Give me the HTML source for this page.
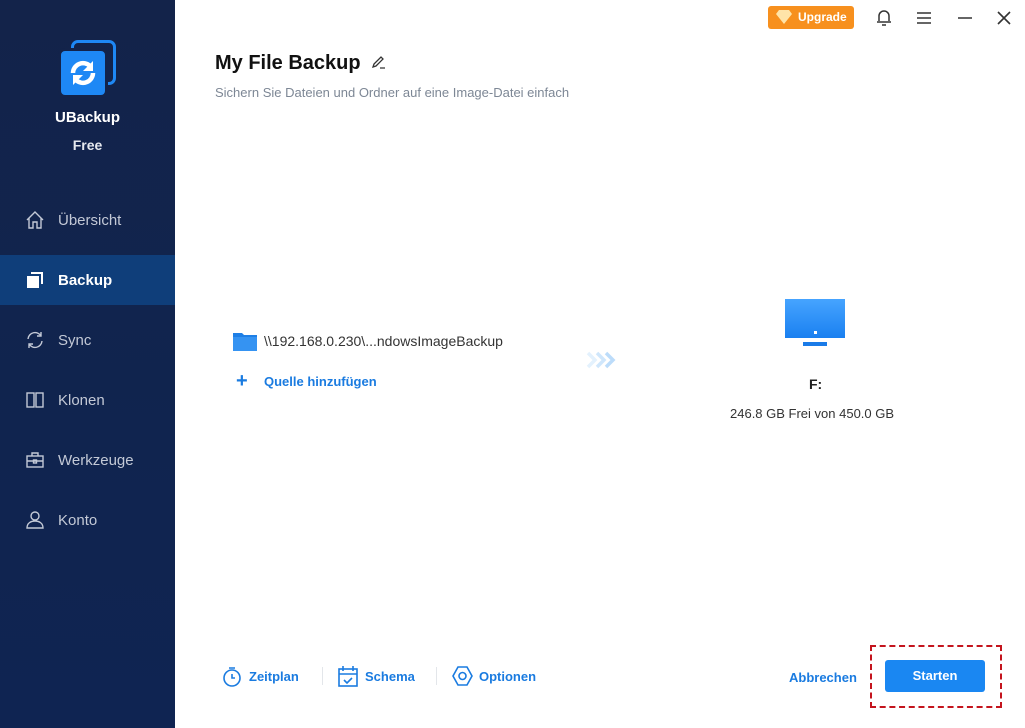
<!DOCTYPE html>
<html><head><meta charset="utf-8"><style>
*{margin:0;padding:0;box-sizing:border-box}
body{width:1025px;height:728px;overflow:hidden;font-family:"Liberation Sans",sans-serif;background:#fff;position:relative}
.side{position:absolute;left:0;top:0;width:175px;height:728px;background:linear-gradient(#13234a,#10244f 60%,#0f2452)}
.abs{position:absolute}
.nav{position:absolute;left:0;width:175px;height:50px;display:flex;align-items:center;color:#c3c9d6;font-size:15px}
.nav svg{position:absolute;left:25px}
.nav span{position:absolute;left:58px}
.act{background:#0f3e7a;color:#fff;font-weight:bold}
.blue{color:#1a7be0}
</style></head><body>
<div class="side">
 <div class="abs" style="left:71px;top:40px;width:45px;height:45px;border:3px solid #1e88f5;border-radius:7px"></div>
 <div class="abs" style="left:58px;top:48px;width:50px;height:50px;background:#1e88f5;border-radius:7px;border:3px solid #13234a"></div>
 <svg class="abs" style="left:68px;top:58px" width="30" height="30" viewBox="0 0 30 30"><path d="M5 15a10 10 0 0 1 17-7" stroke="#fff" stroke-width="4.5" fill="none"/><path d="M25 3v10h-10z" fill="#fff"/><path d="M25 15a10 10 0 0 1-17 7" stroke="#fff" stroke-width="4.5" fill="none"/><path d="M5 27v-10h10z" fill="#fff"/></svg>
 <div class="abs" style="left:0;width:175px;top:109px;text-align:center;color:#fff;font-weight:bold;font-size:15px">UBackup</div>
 <div class="abs" style="left:0;width:175px;top:137px;text-align:center;color:#e6e9ef;font-weight:bold;font-size:14px">Free</div>
 <div class="nav" style="top:195px"><svg width="20" height="20" viewBox="0 0 20 20" fill="none" stroke="#c3c9d6" stroke-width="1.4"><path d="M2 10L10 2l8 8M4 8v10h4v-6h4v6h4V8"/></svg><span>Übersicht</span></div>
 <div class="nav act" style="top:255px"><svg width="20" height="20" viewBox="0 0 20 20"><rect x="2" y="6" width="12" height="12" fill="#fff"/><path d="M6 3h11v11" stroke="#fff" stroke-width="2" fill="none"/></svg><span>Backup</span></div>
 <div class="nav" style="top:315px"><svg width="20" height="20" viewBox="0 0 20 20" fill="none" stroke="#c3c9d6" stroke-width="1.4"><path d="M3 9a7 7 0 0 1 13-3M17 11a7 7 0 0 1-13 3M16 2v4h-4M4 18v-4h4"/></svg><span>Sync</span></div>
 <div class="nav" style="top:375px"><svg width="20" height="20" viewBox="0 0 20 20" fill="none" stroke="#c3c9d6" stroke-width="1.4"><rect x="2" y="3" width="7" height="14"/><rect x="11" y="3" width="7" height="14"/></svg><span>Klonen</span></div>
 <div class="nav" style="top:435px"><svg width="20" height="20" viewBox="0 0 20 20" fill="none" stroke="#c3c9d6" stroke-width="1.4"><rect x="2" y="6" width="16" height="11"/><path d="M7 6V3h6v3M2 11h16"/><rect x="8.5" y="10" width="3" height="3"/></svg><span>Werkzeuge</span></div>
 <div class="nav" style="top:495px"><svg width="20" height="20" viewBox="0 0 20 20" fill="none" stroke="#c3c9d6" stroke-width="1.4"><circle cx="10" cy="6" r="4"/><path d="M2 18c0-5 4-7 8-7s8 2 8 7z"/></svg><span>Konto</span></div>
</div>

<div class="abs" style="left:768px;top:6px;width:86px;height:23px;background:#f7901e;border-radius:3px;color:#fff;font-size:12px;font-weight:bold;line-height:23px;padding-left:30px">Upgrade</div>
<svg class="abs" style="left:776px;top:10px" width="16" height="14" viewBox="0 0 16 14"><path d="M3 0h10l3 4-8 10L0 4z" fill="#ffe4a8"/></svg>
<svg class="abs" style="left:876px;top:9px" width="16" height="18" viewBox="0 0 16 18" fill="none" stroke="#333" stroke-width="1.5"><path d="M3 12V7a5 5 0 0 1 10 0v5M1 13h14M6 16h4"/></svg>
<svg class="abs" style="left:917px;top:11px" width="14" height="14" stroke="#333" stroke-width="1.5"><path d="M0 2h14M0 7h14M0 12h14"/></svg>
<svg class="abs" style="left:958px;top:11px" width="14" height="14" stroke="#333" stroke-width="1.5"><path d="M0 7h14"/></svg>
<svg class="abs" style="left:997px;top:11px" width="14" height="14" stroke="#333" stroke-width="1.6"><path d="M1 1l12 12M13 1L1 13"/></svg>

<div class="abs" style="left:215px;top:52px;font-size:20px;font-weight:bold;color:#111">My File Backup</div>
<svg class="abs" style="left:371px;top:55px" width="15" height="15" viewBox="0 0 15 15" fill="none" stroke="#333" stroke-width="1.3"><path d="M2 12l1-3 7-7 2 2-7 7zM9 13h5"/></svg>
<div class="abs" style="left:215px;top:85px;font-size:13px;color:#7d8795">Sichern Sie Dateien und Ordner auf eine Image-Datei einfach</div>

<svg class="abs" style="left:233px;top:331px" width="24" height="20" viewBox="0 0 24 20"><path d="M0 2h9l2 2h13v16H0z" fill="#1e7fe6"/><rect x="0" y="6" width="24" height="14" fill="#3593f2"/></svg>
<div class="abs" style="left:264px;top:333px;font-size:14px;color:#333">\\192.168.0.230\...ndowsImageBackup</div>
<div class="abs blue" style="left:236px;top:370px;font-size:20px;font-weight:bold">+</div>
<div class="abs blue" style="left:264px;top:374px;font-size:13px;font-weight:bold">Quelle hinzufügen</div>
<svg class="abs" style="left:586px;top:351px" width="30" height="18" viewBox="0 0 30 18" fill="none" stroke-width="3.5"><path d="M2 2l7 7-7 7" stroke="#e3f1fd"/><path d="M11 2l7 7-7 7" stroke="#cfe6fb"/><path d="M20 2l7 7-7 7" stroke="#bcdcfa"/></svg>

<div class="abs" style="left:785px;top:299px;width:60px;height:39px;background:linear-gradient(#46a4ff,#1a80f0)"></div>
<div class="abs" style="left:814px;top:331px;width:3px;height:3px;background:#fff"></div>
<div class="abs" style="left:803px;top:342px;width:24px;height:4px;background:#1a7be8"></div>
<div class="abs" style="left:809px;top:376px;font-size:14px;font-weight:bold;color:#222">F:</div>
<div class="abs" style="left:730px;top:406px;font-size:13px;color:#333">246.8 GB Frei von 450.0 GB</div>

<svg class="abs" style="left:222px;top:666px" width="20" height="22" viewBox="0 0 20 22" fill="none" stroke="#1a7be0" stroke-width="1.6"><circle cx="10" cy="12" r="8"/><path d="M7 2h6M10 8v4h3"/></svg>
<div class="abs blue" style="left:249px;top:669px;font-size:13px;font-weight:bold">Zeitplan</div>
<div class="abs" style="left:322px;top:667px;width:1px;height:18px;background:#e3e6ea"></div>
<svg class="abs" style="left:338px;top:665px" width="20" height="22" viewBox="0 0 20 22" fill="none" stroke="#1a7be0" stroke-width="1.6"><rect x="1" y="4" width="18" height="17"/><path d="M1 9h18M5 1v5M15 1v5M6 15l3 3 5-5"/></svg>
<div class="abs blue" style="left:365px;top:669px;font-size:13px;font-weight:bold">Schema</div>
<div class="abs" style="left:436px;top:667px;width:1px;height:18px;background:#e3e6ea"></div>
<svg class="abs" style="left:452px;top:666px" width="21" height="20" viewBox="0 0 21 20" fill="none" stroke="#1a7be0" stroke-width="1.6"><path d="M6 1h9l5 9-5 9H6L1 10z"/><circle cx="10.5" cy="10" r="3.5"/></svg>
<div class="abs blue" style="left:479px;top:669px;font-size:13px;font-weight:bold">Optionen</div>

<div class="abs blue" style="left:789px;top:670px;font-size:13px;font-weight:bold">Abbrechen</div>
<div class="abs" style="left:870px;top:645px;width:132px;height:63px;border:2px dashed #c4141d"></div>
<div class="abs" style="left:885px;top:660px;width:100px;height:32px;background:#1a87f2;border-radius:3px;color:#fff;font-size:13px;font-weight:bold;text-align:center;line-height:32px">Starten</div>
</body></html>
